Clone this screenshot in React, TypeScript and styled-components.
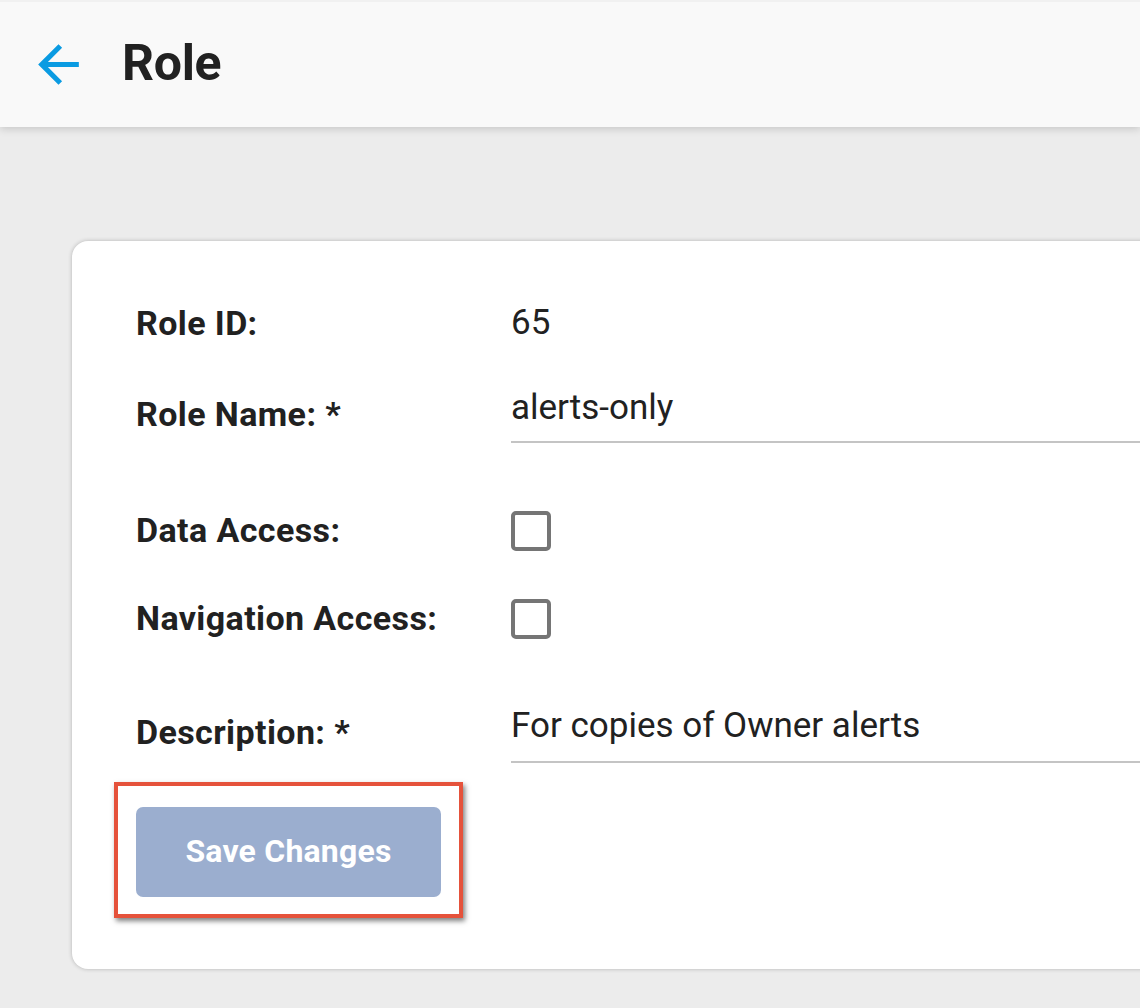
import React from "react";
import styled, { createGlobalStyle } from "styled-components";

const GlobalStyle = createGlobalStyle`
  html, body {
    margin: 0;
    padding: 0;
    background: #ececec;
    font-family: Roboto, "Liberation Sans", Arial, sans-serif;
    color: #212121;
    overflow: hidden;
  }
`;

const Page = styled.div`
  min-height: 1008px;
  background: #ececec;
`;

const Header = styled.header`
  height: 125px;
  border-top: 2px solid #f1f1f1;
  background: #f9f9f9;
  box-shadow: 0 2px 8px rgba(0, 0, 0, 0.16);
  display: flex;
  align-items: center;
  padding-left: 28px;
  position: relative;
  z-index: 1;
`;

const BackButton = styled.button`
  width: 61px;
  height: 61px;
  padding: 0;
  margin: 0 33px 0 0;
  border: none;
  background: none;
  color: #0a9be2;
  display: flex;
  cursor: pointer;
  svg {
    width: 61px;
    height: 61px;
  }
`;

const Title = styled.h1`
  margin: 0 0 3px;
  font-size: 50px;
  font-weight: 700;
  letter-spacing: -0.3px;
`;

const Main = styled.main`
  padding: 114px 0 0 72px;
`;

const Card = styled.section`
  width: 1120px;
  box-sizing: border-box;
  background: #fff;
  border-radius: 16px;
  box-shadow: 0 0 4px rgba(0, 0, 0, 0.24);
  padding: 62px 0 51px 64px;
  display: flex;
  flex-direction: column;
  align-items: flex-start;
`;

const Row = styled.div<{ $top: number }>`
  display: grid;
  grid-template-columns: 375px 1fr;
  width: 100%;
  margin-top: ${(p) => p.$top}px;
  align-items: start;
`;

const Label = styled.label<{ $offset?: number }>`
  font-size: 34px;
  line-height: 40px;
  font-weight: 700;
  letter-spacing: 0.4px;
  padding-top: ${(p) => p.$offset ?? 0}px;
`;

const Value = styled.span`
  font-size: 35px;
  line-height: 40px;
`;

const TextInput = styled.input<{ $pad: number }>`
  display: block;
  width: 100%;
  box-sizing: border-box;
  border: none;
  border-bottom: 2px solid #c4c4c4;
  padding: 0 0 ${(p) => p.$pad}px;
  margin: 0;
  height: ${(p) => 42 + p.$pad}px;
  font-family: inherit;
  font-size: 35px;
  line-height: 40px;
  color: #212121;
  background: transparent;
  outline: none;
`;

const Checkbox = styled.span`
  display: block;
  width: 40px;
  height: 40px;
  box-sizing: border-box;
  border: 4px solid #757575;
  border-radius: 5px;
  margin-top: 1px;
`;

const Highlight = styled.div`
  margin: 19px 0 0 -22px;
  border: 4px solid #e5523b;
  padding: 21px 18px 17px;
  box-shadow: 2px 3px 5px rgba(0, 0, 0, 0.5);
`;

const SaveButton = styled.button`
  width: 305px;
  height: 90px;
  padding: 0 0 3px;
  border: none;
  border-radius: 7px;
  background: #9baecf;
  color: #fff;
  font-family: inherit;
  font-size: 32px;
  font-weight: 700;
  letter-spacing: 0.2px;
  cursor: default;
`;

const BackArrow = () => (
  <svg viewBox="0 0 24 24" fill="currentColor" aria-hidden="true">
    <path d="M20 11H7.83l5.59-5.59L12 4l-8 8 8 8 1.41-1.41L7.83 13H20v-2z" />
  </svg>
);

export default function App() {
  return (
    <Page>
      <GlobalStyle />
      <Header>
        <BackButton aria-label="Back">
          <BackArrow />
        </BackButton>
        <Title>Role</Title>
      </Header>
      <Main>
        <Card>
          <Row $top={0}>
            <Label>Role ID:</Label>
            <Value>65</Value>
          </Row>
          <Row $top={44}>
            <Label $offset={7}>Role Name: *</Label>
            <TextInput $pad={14} defaultValue="alerts-only" />
          </Row>
          <Row $top={67}>
            <Label>Data Access:</Label>
            <Checkbox role="checkbox" aria-checked="false" />
          </Row>
          <Row $top={47}>
            <Label>Navigation Access:</Label>
            <Checkbox role="checkbox" aria-checked="false" />
          </Row>
          <Row $top={66}>
            <Label $offset={7}>Description: *</Label>
            <TextInput $pad={16} defaultValue="For copies of Owner alerts" />
          </Row>
          <Highlight>
            <SaveButton disabled>Save Changes</SaveButton>
          </Highlight>
        </Card>
      </Main>
    </Page>
  );
}
